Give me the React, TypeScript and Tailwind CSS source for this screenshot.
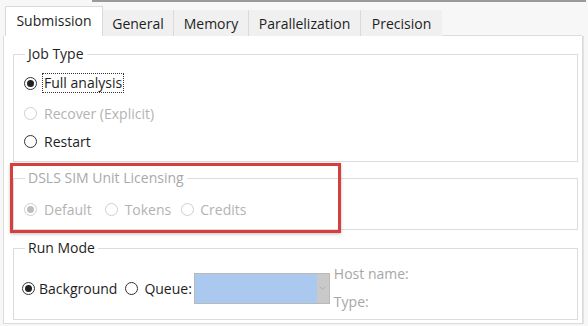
import type { ReactNode } from "react";

const font = { fontFamily: '"Open Sans", "Noto Sans", "Liberation Sans", sans-serif' };

function Radio({ checked = false, disabled = false }: { checked?: boolean; disabled?: boolean }) {
  return (
    <span
      className={
        disabled
          ? "flex size-[13px] shrink-0 items-center justify-center rounded-full border border-[#cfcfcf] bg-white"
          : "flex size-[13px] shrink-0 items-center justify-center rounded-full border border-[#333333] bg-white"
      }
    >
      {checked ? (
        <span className={disabled ? "size-[7px] rounded-full bg-[#bdbdbd]" : "size-[7px] rounded-full bg-[#222222]"} />
      ) : null}
    </span>
  );
}

function Group({ title, disabled = false, className, children }: { title: string; disabled?: boolean; className: string; children: ReactNode }) {
  return (
    <fieldset className={`border border-[#dcdcdc] ${className}`}>
      <legend className={disabled ? "ml-[11px] px-[3px] leading-[20px] text-[#a9a9a9]" : "ml-[11px] px-[3px] leading-[20px] text-[#1e1e1e]"}>
        {title}
      </legend>
      {children}
    </fieldset>
  );
}

const tabs = [
  { label: "General", w: "w-[71px]" },
  { label: "Memory", w: "w-[75px]" },
  { label: "Parallelization", w: "w-[112px]" },
  { label: "Precision", w: "w-[81px]" },
];

export default function App() {
  return (
    <div className="relative h-[326px] w-[588px] overflow-hidden bg-[#f7f7f7] text-[14px] text-[#1e1e1e]" style={font}>
      <div className="flex h-[6px]">
        <div className="w-[92px]" />
        <div className="h-[2px] w-[494px] bg-[#9a9a9a]" />
      </div>

      <div className="flex h-[30px] items-end pl-[5px]">
        <div className="flex h-[30px] w-[98px] items-center justify-center border-x border-t border-[#d9d9d9] bg-white pb-[2px]">
          Submission
        </div>
        <div className="flex h-[26px] items-center bg-[#f0f0f0]">
          {tabs.map((t, i) => (
            <div
              key={t.label}
              className={`flex h-[26px] items-center justify-center ${t.w} ${i < tabs.length - 1 ? "border-r border-[#dadada]" : ""}`}
            >
              {t.label}
            </div>
          ))}
        </div>
        <div className="h-[26px] w-[140px] border-b border-[#dcdcdc]" />
      </div>

      <div className="flex">
        <div className="ml-[3px] flex h-[288px] w-[580px] flex-col border-x border-b border-[#dcdcdc] bg-white pl-[9px] pr-[4px]">
          <Group title="Job Type" className="mt-[8px] h-[118px]">
            <div className="flex flex-col pl-[10px]">
              <div className="mt-[8px] flex h-[22px] items-center gap-[5px]">
                <Radio checked />
                <span className="border border-dotted border-[#333333] px-[1px] leading-[18px]">Full analysis</span>
              </div>
              <div className="mt-[8px] flex h-[22px] items-center gap-[7px] text-[#b3b3b3]">
                <Radio disabled />
                <span>Recover (Explicit)</span>
              </div>
              <div className="mt-[6px] flex h-[22px] items-center gap-[7px]">
                <Radio />
                <span>Restart</span>
              </div>
            </div>
          </Group>

          <Group title="DSLS SIM Unit Licensing" disabled className="mt-[6px] h-[62px]">
            <div className="mt-[10px] flex h-[22px] items-center pl-[10px] text-[#b3b3b3]">
              <Radio checked disabled />
              <span className="ml-[7px]">Default</span>
              <span className="ml-[13px]">
                <Radio disabled />
              </span>
              <span className="ml-[7px]">Tokens</span>
              <span className="ml-[10px]">
                <Radio disabled />
              </span>
              <span className="ml-[6px]">Credits</span>
            </div>
          </Group>

          <Group title="Run Mode" className="mt-[8px] h-[82px]">
            <div className="mt-[7px] flex items-center pl-[8px]">
              <Radio checked />
              <span className="ml-[4px]">Background</span>
              <span className="ml-[8px]">
                <Radio />
              </span>
              <span className="ml-[6px]">Queue:</span>
              <div className="ml-[2px] flex h-[31px] w-[136px] border border-[#b9b9b9] bg-[#abc9ef]">
                <div className="flex-1" />
                <div className="flex w-[12px] items-center justify-center bg-[#c9c9c9]">
                  <svg width="7" height="5" viewBox="0 0 7 5">
                    <path d="M0.5 0.5 L3.5 3.5 L6.5 0.5" fill="none" stroke="#b0b0b0" strokeWidth="1" />
                  </svg>
                </div>
              </div>
              <div className="ml-[4px] flex flex-col gap-[10px] leading-[18px] text-[#a7a7a7]">
                <span>Host name:</span>
                <span>Type:</span>
              </div>
            </div>
          </Group>
        </div>
        <div className="w-[1px] bg-[#e2e2e2]" />
      </div>

      <div className="absolute left-[10px] top-[163px] h-[70px] w-[331px] border-[3px] border-[#d5403f] shadow-[0_1px_3px_rgba(0,0,0,0.25)]" />
    </div>
  );
}
